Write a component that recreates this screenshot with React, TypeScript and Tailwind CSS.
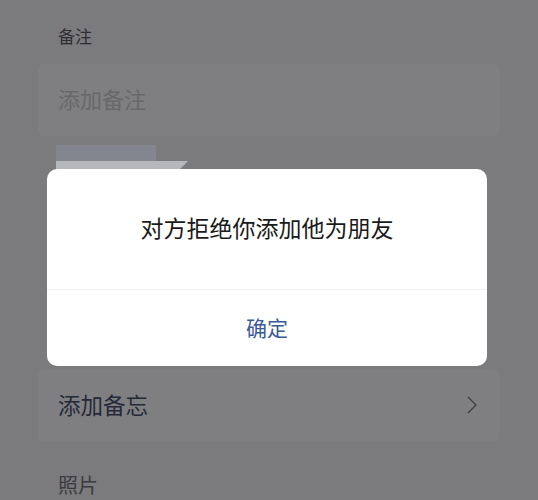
export default function App() {
  return (
    <div
      className="relative w-[538px] h-[500px] overflow-hidden bg-[#7b7b7d]"
      style={{ fontFamily: '"Noto Sans CJK SC", "Noto Sans", sans-serif' }}
    >
      <div className="flex flex-col">
        {/* 备注 */}
        <div className="pl-[58px] pt-[24px] h-[64px] text-[17px] leading-[24px] text-[#2e2e30]">备注</div>
        <div className="mx-[38px] h-[72px] rounded-md bg-[#7f7f81] flex items-center pl-[20px] pb-[4px]">
          <span className="text-[22px] text-[#68686a]">添加备注</span>
        </div>
        {/* blurred tag */}
        <div className="ml-[56px] mt-[9px] h-[24px] flex flex-col">
          <div className="w-[100px] h-[16px] bg-[#83858f]"></div>
          <div className="w-[132px] h-[8px] bg-[#b6b7bb] [clip-path:polygon(0_0,100%_0,94%_100%,0_100%)]"></div>
        </div>
        <div className="h-[201px]"></div>
        {/* 添加备忘 */}
        <div className="mx-[38px] h-[72px] rounded-md bg-[#7f7f81] flex items-center justify-between pl-[20px] pr-[22px] pb-[2px]">
          <span className="text-[22.5px] text-[#252a38]">添加备忘</span>
          <svg width="12" height="20" viewBox="0 0 12 20" fill="none" stroke="#3e3e42" strokeWidth="1.3">
            <path d="M2 2 L10 10 L2 18" />
          </svg>
        </div>
        <div className="pl-[58px] pt-[28px] text-[20px] text-[#3a3a3c]">照片</div>
      </div>

      {/* dialog */}
      <div className="absolute left-[47px] top-[169px] w-[440px] h-[197px] rounded-[10px] bg-white flex flex-col">
        <div className="h-[121px] flex items-center justify-center border-b border-[#f2f2f2] pb-[4px]">
          <span className="text-[23px] text-[#1a1a1a]">对方拒绝你添加他为朋友</span>
        </div>
        <div className="flex-1 flex items-center justify-center">
          <span className="text-[21px] text-[#3c5a96]">确定</span>
        </div>
      </div>
    </div>
  );
}
